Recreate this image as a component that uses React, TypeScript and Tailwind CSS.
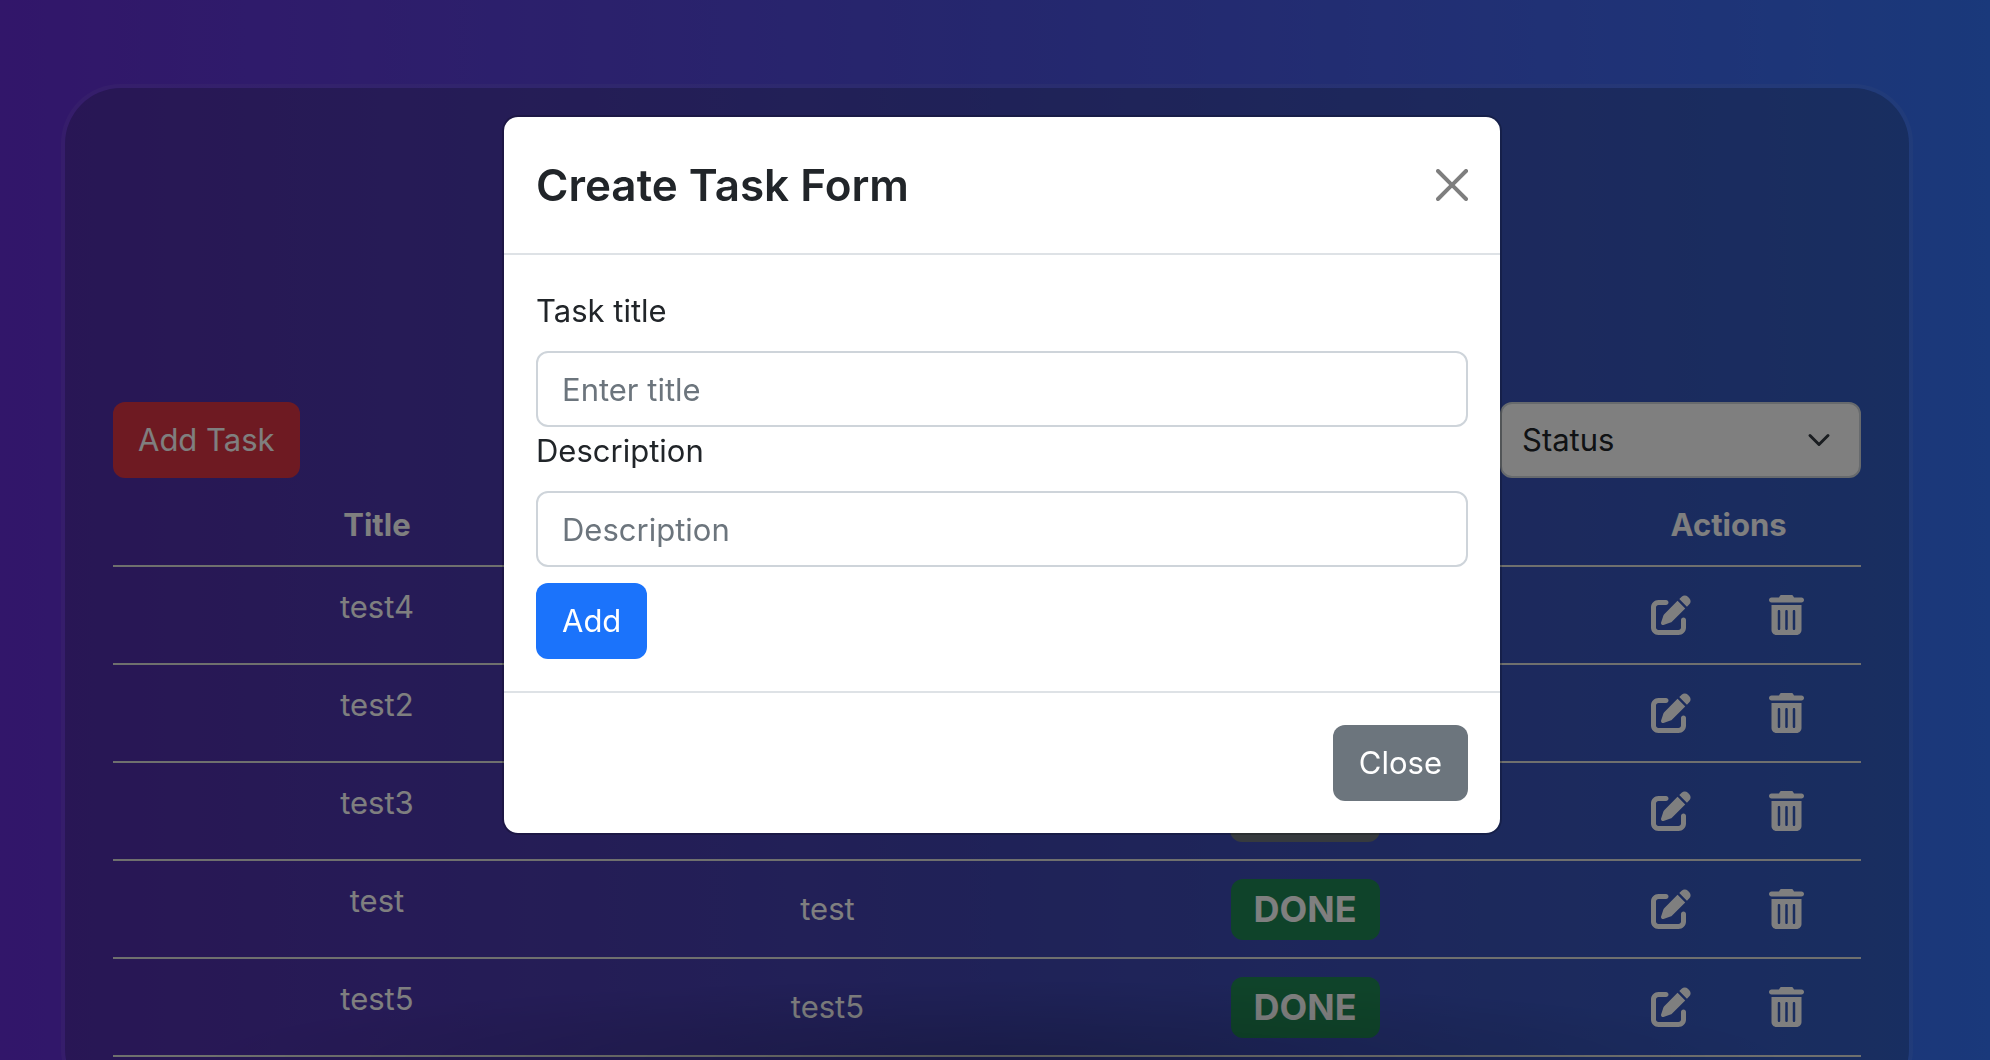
import { FaPenToSquare, FaTrashCan } from "react-icons/fa6";

type Task = { title: string; description: string; status: "TODO" | "DONE" };

const tasks: Task[] = [
  { title: "test4", description: "test4", status: "TODO" },
  { title: "test2", description: "test2", status: "TODO" },
  { title: "test3", description: "test3", status: "TODO" },
  { title: "test", description: "test", status: "DONE" },
  { title: "test5", description: "test5", status: "DONE" },
];

function StatusBadge({ status }: { status: Task["status"] }) {
  const tone = status === "DONE" ? "bg-[#1f8754]" : "bg-[#6c757d]";
  return (
    <span className={`inline-flex h-[61px] items-center rounded-xl px-[23px] text-[36px] font-bold text-white ${tone}`}>
      {status}
    </span>
  );
}

function TaskTable() {
  return (
    <table className="mt-[7px] w-full table-fixed border-separate border-spacing-0 text-center text-white">
      <colgroup>
        <col className="w-[30.2%]" />
        <col className="w-[21.35%]" />
        <col className="w-[33.3%]" />
        <col className="w-[15.15%]" />
      </colgroup>
      <thead>
        <tr>
          {["Title", "Description", "Status", "Actions"].map((name) => (
            <th key={name} className="border-b-2 border-[#dee0dc] p-4 font-bold">
              {name}
            </th>
          ))}
        </tr>
      </thead>
      <tbody>
        {tasks.map((task) => (
          <tr key={task.title}>
            <td className="h-[98px] border-b-2 border-[#dee0dc] px-4 pt-4 align-top">{task.title}</td>
            <td className="border-b-2 border-[#dee0dc] px-4 align-middle">{task.description}</td>
            <td className="border-b-2 border-[#dee0dc] px-4 align-middle leading-none">
              <StatusBadge status={task.status} />
            </td>
            <td className="border-b-2 border-[#dee0dc] pr-0.5 align-middle">
              <div className="flex items-center justify-center gap-[78px]">
                <button type="button" aria-label={`Edit ${task.title}`}>
                  <FaPenToSquare className="block size-10" />
                </button>
                <button type="button" aria-label={`Delete ${task.title}`}>
                  <FaTrashCan className="block h-10 w-[35px]" />
                </button>
              </div>
            </td>
          </tr>
        ))}
      </tbody>
    </table>
  );
}

function CreateTaskModal() {
  const field =
    "block h-[76px] w-full rounded-xl border-2 border-[#ced4da] bg-white px-6 text-[#212529] placeholder:text-[#6c757d] placeholder:opacity-100";
  return (
    <div className="fixed inset-0 flex items-start justify-center bg-black/50 pt-[115px] pl-3.5">
      <div
        role="dialog"
        aria-modal="true"
        aria-labelledby="create-task-title"
        className="w-[1000px] rounded-2xl border-2 border-black/20 bg-white bg-clip-padding text-[#212529]"
      >
        <div className="flex items-center justify-between border-b-2 border-[#dee2e6] p-8">
          <h2 id="create-task-title" className="text-[44px] leading-[72px] font-semibold">
            Create Task Form
          </h2>
          <button type="button" aria-label="Dismiss" className="opacity-50">
            <svg viewBox="0 0 16 16" className="block size-8" fill="#000">
              <path d="M.293.293a1 1 0 0 1 1.414 0L8 6.586 14.293.293a1 1 0 1 1 1.414 1.414L9.414 8l6.293 6.293a1 1 0 0 1-1.414 1.414L8 9.414l-6.293 6.293a1 1 0 0 1-1.414-1.414L6.586 8 .293 1.707a1 1 0 0 1 0-1.414z" />
            </svg>
          </button>
        </div>
        <form className="p-8">
          <label htmlFor="task-title" className="mb-4 block">
            Task title
          </label>
          <input id="task-title" type="text" placeholder="Enter title" className={field} />
          <label htmlFor="task-description" className="mb-4 block">
            Description
          </label>
          <input id="task-description" type="text" placeholder="Description" className={field} />
          <button type="button" className="mt-4 block h-[76px] rounded-xl bg-[#1b73fb] px-[26px] text-white">
            Add
          </button>
        </form>
        <div className="flex justify-end border-t-2 border-[#dee2e6] p-8">
          <button type="button" className="h-[76px] rounded-xl bg-[#6c757d] px-[26px] text-white">
            Close
          </button>
        </div>
      </div>
    </div>
  );
}

export default function App() {
  return (
    <div className="h-screen overflow-hidden bg-linear-to-r from-[#642cd4] via-[#4a4edc] to-[#3472f6] pt-[84px] pr-[77px] pl-[61px] font-['Inter',sans-serif] text-[31px] leading-[48px]">
      <main className="rounded-[60px] border-4 border-white/6 bg-[#20282c]/25 bg-clip-padding px-12 pt-[314px] pb-12">
        <div className="flex items-center justify-between">
          <button type="button" className="h-[76px] rounded-xl bg-[#dc3545] px-[25px] text-white">
            Add Task
          </button>
          <div className="relative w-[361px]">
            <select
              aria-label="Status"
              className="block h-[76px] w-full appearance-none rounded-xl border-2 border-[#ced4da] bg-white px-5 text-[#212529]"
            >
              <option>Status</option>
            </select>
            <svg
              viewBox="0 0 16 16"
              className="pointer-events-none absolute top-[26px] right-[30px] size-6"
              fill="none"
              stroke="#343a40"
              strokeWidth="2"
              strokeLinecap="round"
              strokeLinejoin="round"
            >
              <path d="m2 5 6 6 6-6" />
            </svg>
          </div>
        </div>
        <TaskTable />
      </main>
      <div className="pointer-events-none fixed inset-x-0 bottom-0 mx-auto h-20 w-4/5 bg-[radial-gradient(ellipse_at_bottom,rgba(0,0,0,0.18),transparent_70%)]" />
      <CreateTaskModal />
    </div>
  );
}
